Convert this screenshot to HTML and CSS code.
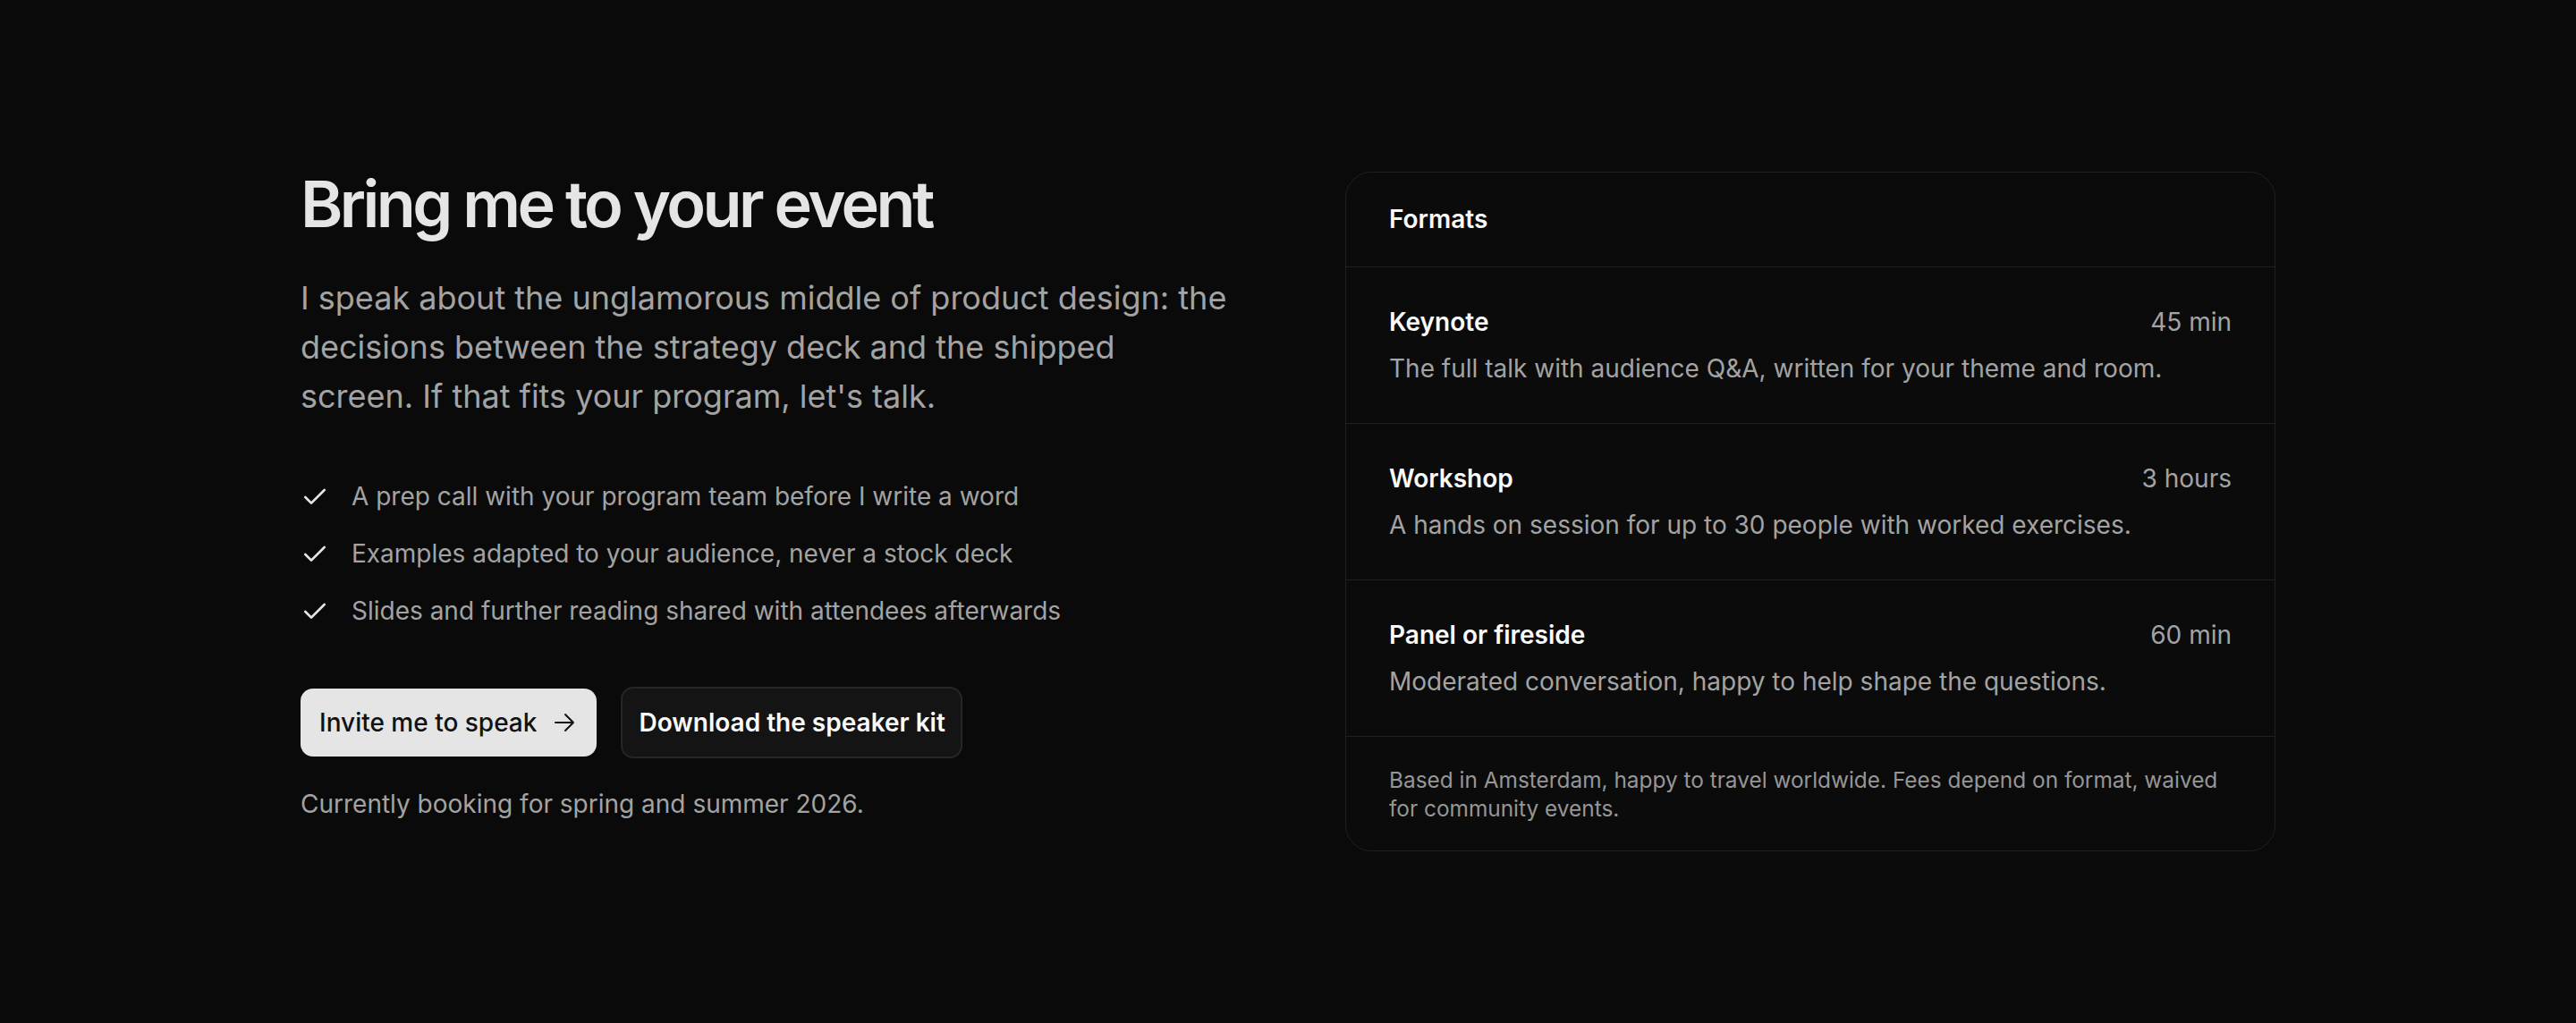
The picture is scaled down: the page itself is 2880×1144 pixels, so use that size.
FILE: index.html
```html
<!DOCTYPE html>
<html lang="en">

<head>
  <meta charset="UTF-8">
  <meta name="viewport" content="width=device-width, initial-scale=1.0">
  <title>Speaking</title>
  <link rel="stylesheet" href="styles.css">
</head>

<body>

  <main class="speaking">
    <div class="speaking__intro">
      <h1 class="speaking__title">Bring me to your event</h1>
      <p class="speaking__lead">I speak about the unglamorous middle of product design: the decisions between the
        strategy deck and the shipped screen. If that fits your program, let's talk.</p>

      <ul class="perks">
        <li>
          <svg class="perks__icon" viewBox="0 0 24 24" fill="none" stroke="currentColor" stroke-width="2"
            stroke-linecap="round" stroke-linejoin="round"><path d="M20 6 9 17l-5-5" /></svg>
          A prep call with your program team before I write a word
        </li>
        <li>
          <svg class="perks__icon" viewBox="0 0 24 24" fill="none" stroke="currentColor" stroke-width="2"
            stroke-linecap="round" stroke-linejoin="round"><path d="M20 6 9 17l-5-5" /></svg>
          Examples adapted to your audience, never a stock deck
        </li>
        <li>
          <svg class="perks__icon" viewBox="0 0 24 24" fill="none" stroke="currentColor" stroke-width="2"
            stroke-linecap="round" stroke-linejoin="round"><path d="M20 6 9 17l-5-5" /></svg>
          Slides and further reading shared with attendees afterwards
        </li>
      </ul>

      <div class="actions">
        <a href="#" class="btn btn--primary">Invite me to speak
          <svg class="btn__arrow" viewBox="0 0 24 24" fill="none" stroke="currentColor" stroke-width="2"
            stroke-linecap="round" stroke-linejoin="round"><path d="M2 12h20M13 3l9 9-9 9" /></svg>
        </a>
        <a href="#" class="btn btn--ghost">Download the speaker kit</a>
      </div>

      <p class="speaking__note">Currently booking for spring and summer 2026.</p>
    </div>

    <aside class="formats">
      <h2 class="formats__head">Formats</h2>

      <div class="format">
        <div class="format__top">
          <span class="format__name">Keynote</span>
          <span class="format__time">45 min</span>
        </div>
        <p class="format__desc">The full talk with audience Q&amp;A, written for your theme and room.</p>
      </div>

      <div class="format">
        <div class="format__top">
          <span class="format__name">Workshop</span>
          <span class="format__time">3 hours</span>
        </div>
        <p class="format__desc">A hands on session for up to 30 people with worked exercises.</p>
      </div>

      <div class="format">
        <div class="format__top">
          <span class="format__name">Panel or fireside</span>
          <span class="format__time">60 min</span>
        </div>
        <p class="format__desc">Moderated conversation, happy to help shape the questions.</p>
      </div>

      <p class="formats__foot">Based in Amsterdam, happy to travel worldwide. Fees depend on format, waived for
        community events.</p>
    </aside>
  </main>

</body>

</html>
```

FILE: styles.css
```css
:root {
  --clr-bg: #0a0a0a;
  --clr-line: #202020;
  --clr-text: #e5e5e5;
  --clr-white: #fafafa;
  --clr-muted: #a3a3a3;
  --clr-dim: #969696;

  --fnt-main: Inter, "Noto Sans", sans-serif;
}

* {
  box-sizing: border-box;
  margin: 0;
  padding: 0;
}

body {
  min-height: 100vh;
  display: flex;
  align-items: center;
  justify-content: center;
  font-family: var(--fnt-main);
  background-color: var(--clr-bg);
  color: var(--clr-text);
}

.speaking {
  width: 2208px;
  display: grid;
  grid-template-columns: 1fr 1fr;
  gap: 128px;
  align-items: start;
}

.speaking__title {
  font-size: 72px;
  line-height: 72px;
  font-weight: 600;
  letter-spacing: -0.05em;
  color: var(--clr-text);
}

.speaking__lead {
  margin-top: 42px;
  font-size: 36px;
  line-height: 55px;
  color: var(--clr-muted);
}

.perks {
  list-style: none;
  margin-top: 63px;
  display: grid;
  gap: 21px;
}

.perks li {
  display: flex;
  align-items: center;
  gap: 25px;
  font-size: 28px;
  line-height: 43px;
  color: var(--clr-muted);
}

.perks__icon {
  width: 32px;
  height: 32px;
  flex-shrink: 0;
  color: var(--clr-text);
}

.actions {
  margin-top: 63px;
  display: flex;
  align-items: center;
  gap: 27px;
}

.btn {
  display: inline-flex;
  align-items: center;
  gap: 19px;
  font-size: 28px;
  line-height: 44px;
  font-weight: 500;
  text-decoration: none;
  border-radius: 14px;
}

.btn--primary {
  padding: 16px 24px 16px 21px;
  background-color: #e5e5e5;
  color: #111;
}

.btn__arrow {
  width: 24px;
  height: 24px;
}

.btn--ghost {
  padding: 16px 17px 16px 18px;
  background-color: #141414;
  border: 2px solid #262626;
  color: var(--clr-white);
  font-weight: 600;
}

.speaking__note {
  margin-top: 30px;
  font-size: 28px;
  line-height: 43px;
  color: var(--clr-muted);
}

/* formats card */

.formats {
  border: 1px solid var(--clr-line);
  border-radius: 29px;
  background-color: #0b0b0b;
}

.formats__head {
  padding: 31px 48px 32px;
  font-size: 28px;
  line-height: 42px;
  font-weight: 600;
  color: var(--clr-white);
}

.format {
  border-top: 1px solid var(--clr-line);
  padding: 40px 48px;
}

.format__top {
  display: flex;
  justify-content: space-between;
  align-items: baseline;
  font-size: 28px;
  line-height: 42px;
}

.format__name {
  font-weight: 600;
  color: var(--clr-white);
}

.format__time {
  color: var(--clr-muted);
}

.format__desc {
  margin-top: 10px;
  font-size: 28px;
  line-height: 42px;
  color: var(--clr-muted);
}

.formats__foot {
  border-top: 1px solid var(--clr-line);
  padding: 32px 48px 31px;
  font-size: 24.4px;
  line-height: 32px;
  color: var(--clr-dim);
}
```
